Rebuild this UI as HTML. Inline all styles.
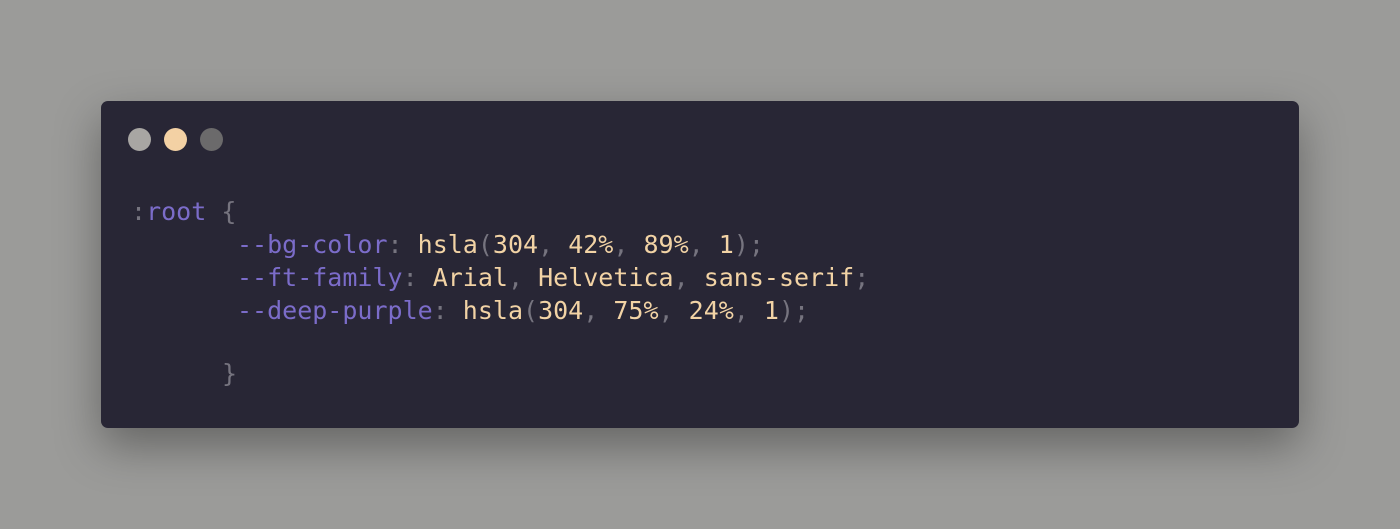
<!DOCTYPE html>
<html><head><style>
html,body{margin:0;padding:0;}
body{width:1400px;height:529px;background:#9b9b99;position:relative;overflow:hidden;font-family:"DejaVu Sans Mono","Liberation Mono",monospace;}
.card{position:absolute;left:101px;top:101px;width:1198px;height:327px;background:#282635;border-radius:7px;box-shadow:0 18px 45px rgba(0,0,0,0.35);}
.dot{position:absolute;top:128px;width:23px;height:23px;border-radius:50%;}
.code{position:absolute;font-size:25px;line-height:33px;white-space:pre;}
.p{color:#7b6cc9}.g{color:#76747f}.y{color:#f2d3a5}
</style></head><body>
<div class="card"></div>
<div class="dot" style="left:128px;background:#a8a6a3"></div>
<div class="dot" style="left:164px;background:#f3d1a4"></div>
<div class="dot" style="left:200px;background:#6b6a6b"></div>
<div class="code" style="left:131px;top:195px"><span class="g">:</span><span class="p">root</span> <span class="g">{</span></div>
<div class="code" style="left:237px;top:228px"><span class="p">--bg-color</span><span class="g">:</span> <span class="y">hsla</span><span class="g">(</span><span class="y">304</span><span class="g">,</span> <span class="y">42%</span><span class="g">,</span> <span class="y">89%</span><span class="g">,</span> <span class="y">1</span><span class="g">);</span>
<span class="p">--ft-family</span><span class="g">:</span> <span class="y">Arial</span><span class="g">,</span> <span class="y">Helvetica</span><span class="g">,</span> <span class="y">sans-serif</span><span class="g">;</span>
<span class="p">--deep-purple</span><span class="g">:</span> <span class="y">hsla</span><span class="g">(</span><span class="y">304</span><span class="g">,</span> <span class="y">75%</span><span class="g">,</span> <span class="y">24%</span><span class="g">,</span> <span class="y">1</span><span class="g">);</span></div>
<div class="code" style="left:222px;top:357px"><span class="g">}</span></div>
</body></html>
